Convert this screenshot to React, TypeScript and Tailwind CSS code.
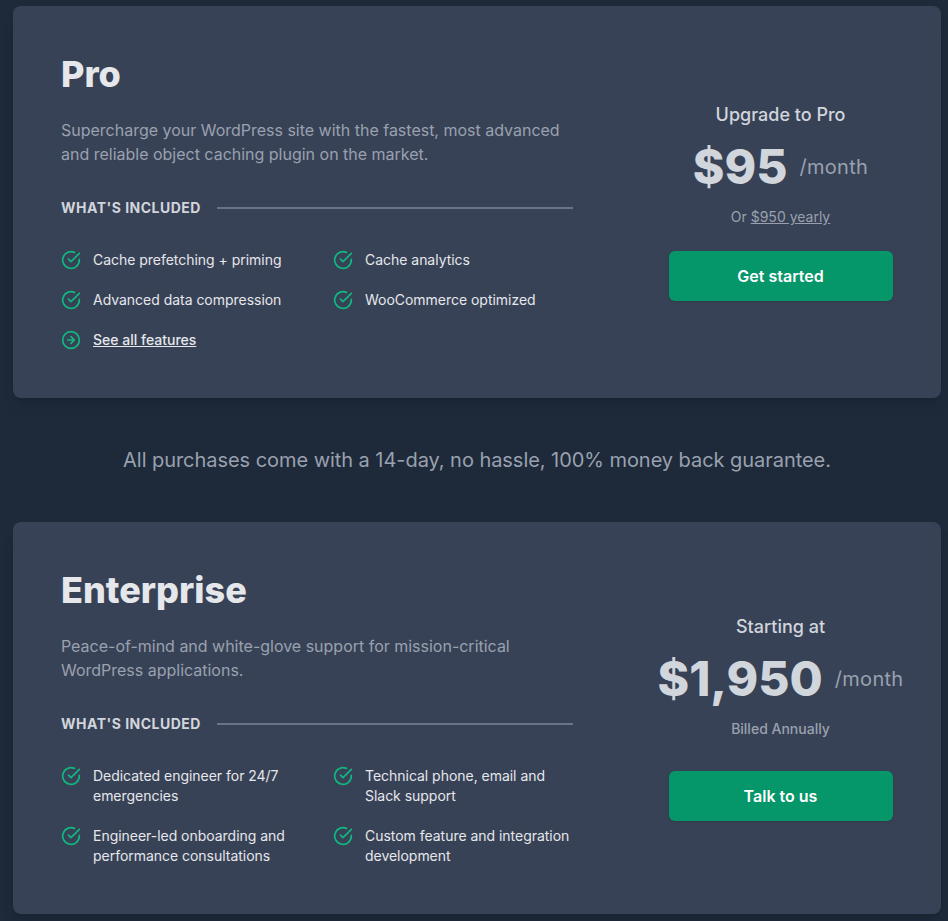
import React from 'react';

type Plan = {
  name: string;
  text: string;
  features: string[];
  link?: string;
  intro: string;
  price: string;
  note: React.ReactNode;
  action: string;
};

const plans: Plan[] = [
  {
    name: 'Pro',
    text: 'Supercharge your WordPress site with the fastest, most advanced and reliable object caching plugin on the market.',
    features: ['Cache prefetching + priming', 'Cache analytics', 'Advanced data compression', 'WooCommerce optimized'],
    link: 'See all features',
    intro: 'Upgrade to Pro',
    price: '$95',
    note: (
      <p className="mt-4 mb-6 text-sm leading-5 text-gray-400">
        Or <a className="underline">$950 yearly</a>
      </p>
    ),
    action: 'Get started',
  },
  {
    name: 'Enterprise',
    text: 'Peace-of-mind and white-glove support for mission-critical WordPress applications.',
    features: [
      'Dedicated engineer for 24/7 emergencies',
      'Technical phone, email and Slack support',
      'Engineer-led onboarding and performance consultations',
      'Custom feature and integration development',
    ],
    intro: 'Starting at',
    price: '$1,950',
    note: <p className="mt-4 mb-8 text-sm leading-5 font-medium text-gray-400">Billed Annually</p>,
    action: 'Talk to us',
  },
];

function Icon({ d }: { d: string }) {
  return (
    <svg className="h-5 w-5 shrink-0 text-[#10b981]" viewBox="0 0 24 24" fill="none" stroke="currentColor" strokeWidth="2" strokeLinecap="round" strokeLinejoin="round">
      <path d={d} />
    </svg>
  );
}

const CHECK = 'M22 11.08V12a10 10 0 1 1-5.93-9.14M22 4 12 14.01l-3-3';
const ARROW = 'M8 12h8M12 8l4 4-4 4M12 2a10 10 0 1 1 0 20 10 10 0 0 1 0-20';

function Card({ plan }: { plan: Plan }) {
  return (
    <section className="flex h-[392px] rounded-lg bg-[#384256] shadow-lg">
      <div className="w-[608px] shrink-0 p-12">
        <h3 className="text-4xl leading-10 font-extrabold text-gray-200">{plan.name}</h3>
        <p className="mt-6 w-[512px] text-base tracking-[-0.0005em] text-gray-400">{plan.text}</p>
        <div className="mt-8 flex items-center">
          <h4 className="pr-4 text-sm font-bold tracking-[0.035em] text-gray-300 uppercase">What's included</h4>
          <div className="flex-1 border-t-2 border-[#677489]" />
        </div>
        <ul className="mt-8 grid grid-cols-2 gap-x-8 gap-y-5">
          {plan.features.map((f) => (
            <li key={f} className="flex items-start">
              <Icon d={CHECK} />
              <p className="ml-3 text-sm leading-5 tracking-[-0.002em] text-gray-200">{f}</p>
            </li>
          ))}
          {plan.link && (
            <li className="flex items-start">
              <Icon d={ARROW} />
              <a className="ml-3 text-sm leading-5 font-medium text-gray-200 underline">{plan.link}</a>
            </li>
          )}
        </ul>
      </div>
      <div className="flex w-[319px] shrink-0 flex-col items-center justify-center text-center">
        <p className="text-lg leading-6 font-medium text-gray-300">{plan.intro}</p>
        <div className="mt-4 flex items-center justify-center whitespace-nowrap text-gray-300">
          <span className="text-5xl leading-none font-extrabold">{plan.price}</span>
          <span className="ml-3 text-xl leading-7 tracking-[0.015em] text-gray-400">/month</span>
        </div>
        {plan.note}
        <button className="h-[50px] w-56 rounded-md bg-[#059669] text-base font-semibold text-white shadow">{plan.action}</button>
      </div>
    </section>
  );
}

export default function App() {
  return (
    <main className="h-[921px] overflow-hidden bg-[#1e293a] pt-1.5 pr-[7px] pl-[13px] font-['Inter',sans-serif]">
      <Card plan={plans[0]} />
      <p className="my-12 text-center text-xl leading-7 tracking-[-0.0025em] text-gray-400">All purchases come with a 14-day, no hassle, 100% money back guarantee.</p>
      <Card plan={plans[1]} />
    </main>
  );
}
